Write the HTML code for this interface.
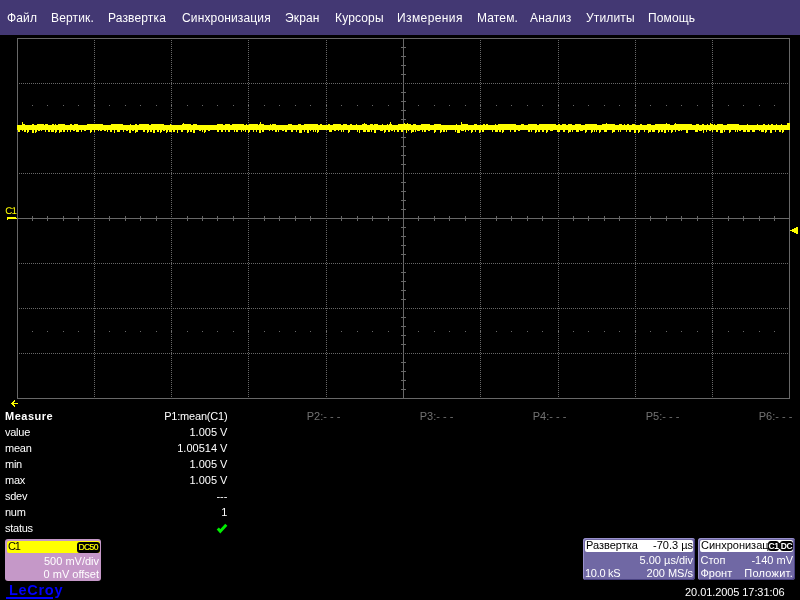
<!DOCTYPE html>
<html lang="ru">
<head>
<meta charset="utf-8">
<title>LeCroy</title>
<style>
html,body{margin:0;padding:0;background:#000;}
body{width:800px;height:600px;position:relative;overflow:hidden;font-family:"Liberation Sans",sans-serif;color:#fff;}
#scr{position:absolute;left:0;top:0;width:800px;height:600px;overflow:hidden;will-change:transform;}
.abs{position:absolute;white-space:nowrap;}
#menu{position:absolute;left:0;top:0;width:800px;height:35px;background:#433873;}
#menu span{position:absolute;top:11px;font-size:12px;line-height:14px;color:#fff;white-space:nowrap;letter-spacing:0.15px;}
.t{position:absolute;font-size:11px;line-height:13px;white-space:nowrap;}
.r{text-align:right;}
.g{color:#727272;}
.box{position:absolute;border-radius:3px;}
.hdr{position:absolute;border-radius:2px;}
.pb{background:#7068a4;box-shadow:inset 1px 1px 0 #9890cc,inset -1px -1px 0 #484080;}
.badge.wb{height:10px;line-height:10px;color:#fff;font-weight:bold;font-size:8.5px;letter-spacing:-0.5px;border-radius:3px;}
.badge{position:absolute;background:#000;border-radius:2px;font-weight:bold;font-size:8px;line-height:10px;text-align:center;}
</style>
</head>
<body>
<div id="scr">
<div id="menu">
<span style="left:7px">Файл</span>
<span style="left:51px">Вертик.</span>
<span style="left:108px">Развертка</span>
<span style="left:182px">Синхронизация</span>
<span style="left:285px">Экран</span>
<span style="left:335px">Курсоры</span>
<span style="left:397px;letter-spacing:0.4px">Измерения</span>
<span style="left:477px">Матем.</span>
<span style="left:530px">Анализ</span>
<span style="left:586px">Утилиты</span>
<span style="left:648px">Помощь</span>
</div>
<svg id="grid" width="800" height="600" viewBox="0 0 800 600" shape-rendering="crispEdges" style="position:absolute;left:0;top:0">
<path d="M17.5 38.5H789.5V398.5H17.5Z" fill="none" stroke="#686868" stroke-width="1"/>
<line x1="94.5" y1="40" x2="94.5" y2="398" stroke="#686868" stroke-width="1" stroke-dasharray="1 1"/>
<line x1="171.5" y1="40" x2="171.5" y2="398" stroke="#686868" stroke-width="1" stroke-dasharray="1 1"/>
<line x1="248.5" y1="40" x2="248.5" y2="398" stroke="#686868" stroke-width="1" stroke-dasharray="1 1"/>
<line x1="326.5" y1="40" x2="326.5" y2="398" stroke="#686868" stroke-width="1" stroke-dasharray="1 1"/>
<line x1="480.5" y1="40" x2="480.5" y2="398" stroke="#686868" stroke-width="1" stroke-dasharray="1 1"/>
<line x1="558.5" y1="40" x2="558.5" y2="398" stroke="#686868" stroke-width="1" stroke-dasharray="1 1"/>
<line x1="635.5" y1="40" x2="635.5" y2="398" stroke="#686868" stroke-width="1" stroke-dasharray="1 1"/>
<line x1="712.5" y1="40" x2="712.5" y2="398" stroke="#686868" stroke-width="1" stroke-dasharray="1 1"/>
<line x1="19" y1="83.5" x2="789" y2="83.5" stroke="#686868" stroke-width="1" stroke-dasharray="1 1"/>
<line x1="19" y1="128.5" x2="789" y2="128.5" stroke="#686868" stroke-width="1" stroke-dasharray="1 1"/>
<line x1="19" y1="173.5" x2="789" y2="173.5" stroke="#686868" stroke-width="1" stroke-dasharray="1 1"/>
<line x1="19" y1="263.5" x2="789" y2="263.5" stroke="#686868" stroke-width="1" stroke-dasharray="1 1"/>
<line x1="19" y1="308.5" x2="789" y2="308.5" stroke="#686868" stroke-width="1" stroke-dasharray="1 1"/>
<line x1="19" y1="353.5" x2="789" y2="353.5" stroke="#686868" stroke-width="1" stroke-dasharray="1 1"/>
<line x1="403.5" y1="38" x2="403.5" y2="398" stroke="#686868"/>
<line x1="17" y1="218.5" x2="789" y2="218.5" stroke="#686868"/>
<path d="M32.5 216V221M47.5 216V221M63.5 216V221M78.5 216V221M109.5 216V221M125.5 216V221M140.5 216V221M156.5 216V221M187.5 216V221M202.5 216V221M217.5 216V221M233.5 216V221M264.5 216V221M279.5 216V221M295.5 216V221M310.5 216V221M341.5 216V221M357.5 216V221M372.5 216V221M388.5 216V221M418.5 216V221M434.5 216V221M449.5 216V221M465.5 216V221M496.5 216V221M511.5 216V221M527.5 216V221M542.5 216V221M573.5 216V221M588.5 216V221M604.5 216V221M619.5 216V221M650.5 216V221M666.5 216V221M681.5 216V221M697.5 216V221M728.5 216V221M743.5 216V221M759.5 216V221M774.5 216V221M401 47.5H406M401 56.5H406M401 65.5H406M401 74.5H406M401 92.5H406M401 101.5H406M401 110.5H406M401 119.5H406M401 137.5H406M401 146.5H406M401 155.5H406M401 164.5H406M401 182.5H406M401 191.5H406M401 200.5H406M401 209.5H406M401 227.5H406M401 236.5H406M401 245.5H406M401 254.5H406M401 272.5H406M401 281.5H406M401 290.5H406M401 299.5H406M401 317.5H406M401 326.5H406M401 335.5H406M401 344.5H406M401 362.5H406M401 371.5H406M401 380.5H406M401 389.5H406" stroke="#686868" fill="none"/>
<path d="M32 105h1v1h-1zM47 105h1v1h-1zM63 105h1v1h-1zM78 105h1v1h-1zM94 105h1v1h-1zM109 105h1v1h-1zM125 105h1v1h-1zM140 105h1v1h-1zM156 105h1v1h-1zM171 105h1v1h-1zM187 105h1v1h-1zM202 105h1v1h-1zM217 105h1v1h-1zM233 105h1v1h-1zM248 105h1v1h-1zM264 105h1v1h-1zM279 105h1v1h-1zM295 105h1v1h-1zM310 105h1v1h-1zM326 105h1v1h-1zM341 105h1v1h-1zM357 105h1v1h-1zM372 105h1v1h-1zM388 105h1v1h-1zM403 105h1v1h-1zM418 105h1v1h-1zM434 105h1v1h-1zM449 105h1v1h-1zM465 105h1v1h-1zM480 105h1v1h-1zM496 105h1v1h-1zM511 105h1v1h-1zM527 105h1v1h-1zM542 105h1v1h-1zM558 105h1v1h-1zM573 105h1v1h-1zM588 105h1v1h-1zM604 105h1v1h-1zM619 105h1v1h-1zM635 105h1v1h-1zM650 105h1v1h-1zM666 105h1v1h-1zM681 105h1v1h-1zM697 105h1v1h-1zM712 105h1v1h-1zM728 105h1v1h-1zM743 105h1v1h-1zM759 105h1v1h-1zM774 105h1v1h-1zM32 331h1v1h-1zM47 331h1v1h-1zM63 331h1v1h-1zM78 331h1v1h-1zM94 331h1v1h-1zM109 331h1v1h-1zM125 331h1v1h-1zM140 331h1v1h-1zM156 331h1v1h-1zM171 331h1v1h-1zM187 331h1v1h-1zM202 331h1v1h-1zM217 331h1v1h-1zM233 331h1v1h-1zM248 331h1v1h-1zM264 331h1v1h-1zM279 331h1v1h-1zM295 331h1v1h-1zM310 331h1v1h-1zM326 331h1v1h-1zM341 331h1v1h-1zM357 331h1v1h-1zM372 331h1v1h-1zM388 331h1v1h-1zM403 331h1v1h-1zM418 331h1v1h-1zM434 331h1v1h-1zM449 331h1v1h-1zM465 331h1v1h-1zM480 331h1v1h-1zM496 331h1v1h-1zM511 331h1v1h-1zM527 331h1v1h-1zM542 331h1v1h-1zM558 331h1v1h-1zM573 331h1v1h-1zM588 331h1v1h-1zM604 331h1v1h-1zM619 331h1v1h-1zM635 331h1v1h-1zM650 331h1v1h-1zM666 331h1v1h-1zM681 331h1v1h-1zM697 331h1v1h-1zM712 331h1v1h-1zM728 331h1v1h-1zM743 331h1v1h-1zM759 331h1v1h-1zM774 331h1v1h-1z" fill="#686868"/>
</svg>
<svg id="trace" width="800" height="600" viewBox="0 0 800 600" shape-rendering="crispEdges" style="position:absolute;left:0;top:0">
<path d="M17 125H790V130H17ZM787 123h3v4h-3zM22 124h1v1h-1zM22 122h1v2h-1zM23 124h1v1h-1zM24 124h1v1h-1zM32 124h2v1h-2zM37 124h2v1h-2zM39 124h3v1h-3zM42 124h1v1h-1zM43 124h1v1h-1zM45 124h3v1h-3zM52 124h2v1h-2zM55 124h1v1h-1zM58 124h4v1h-4zM62 124h1v1h-1zM63 124h2v1h-2zM70 124h2v1h-2zM74 124h2v1h-2zM76 124h2v1h-2zM87 124h4v1h-4zM91 124h2v1h-2zM93 124h1v1h-1zM94 124h4v1h-4zM98 124h2v1h-2zM100 124h3v1h-3zM111 124h1v1h-1zM112 124h4v1h-4zM116 124h3v1h-3zM119 124h1v1h-1zM120 124h3v1h-3zM130 124h1v1h-1zM135 124h2v1h-2zM139 124h1v1h-1zM140 124h2v1h-2zM142 124h1v1h-1zM143 124h3v1h-3zM146 124h1v1h-1zM147 124h2v1h-2zM151 124h2v1h-2zM153 124h2v1h-2zM155 124h1v1h-1zM156 124h2v1h-2zM158 124h3v1h-3zM161 124h3v1h-3zM170 124h1v1h-1zM182 124h1v1h-1zM183 124h4v1h-4zM183 123h1v1h-1zM187 124h2v1h-2zM189 124h2v1h-2zM193 124h2v1h-2zM195 124h2v1h-2zM217 124h2v1h-2zM219 124h4v1h-4zM225 124h1v1h-1zM226 124h4v1h-4zM232 124h2v1h-2zM234 124h1v1h-1zM235 124h4v1h-4zM239 124h1v1h-1zM240 124h1v1h-1zM241 124h3v1h-3zM246 124h1v1h-1zM249 124h3v1h-3zM252 124h3v1h-3zM255 124h3v1h-3zM259 124h1v1h-1zM260 124h4v1h-4zM260 122h1v2h-1zM270 124h1v1h-1zM272 124h3v1h-3zM275 124h1v1h-1zM288 124h1v1h-1zM289 124h2v1h-2zM291 124h1v1h-1zM298 124h1v1h-1zM299 124h2v1h-2zM304 124h1v1h-1zM305 124h3v1h-3zM308 124h2v1h-2zM310 124h1v1h-1zM311 124h4v1h-4zM315 124h3v1h-3zM320 124h1v1h-1zM321 124h1v1h-1zM328 124h2v1h-2zM333 124h4v1h-4zM337 124h4v1h-4zM343 124h4v1h-4zM350 124h1v1h-1zM351 124h1v1h-1zM356 124h1v1h-1zM362 124h2v1h-2zM364 124h2v1h-2zM364 123h1v1h-1zM366 124h1v1h-1zM370 124h3v1h-3zM374 124h4v1h-4zM382 124h1v1h-1zM387 124h1v1h-1zM389 124h1v1h-1zM390 124h2v1h-2zM390 122h1v2h-1zM398 124h3v1h-3zM401 124h2v1h-2zM403 124h1v1h-1zM404 124h3v1h-3zM404 123h1v1h-1zM407 124h1v1h-1zM407 123h1v1h-1zM408 124h1v1h-1zM409 124h1v1h-1zM410 124h1v1h-1zM413 124h2v1h-2zM415 124h1v1h-1zM421 124h3v1h-3zM424 124h2v1h-2zM426 124h4v1h-4zM434 124h4v1h-4zM438 124h3v1h-3zM456 124h1v1h-1zM461 124h3v1h-3zM461 122h1v2h-1zM464 124h4v1h-4zM474 124h3v1h-3zM483 124h2v1h-2zM486 124h2v1h-2zM495 124h1v1h-1zM498 124h4v1h-4zM502 124h1v1h-1zM503 124h4v1h-4zM507 124h2v1h-2zM509 124h2v1h-2zM511 124h3v1h-3zM514 124h2v1h-2zM521 124h2v1h-2zM523 124h1v1h-1zM528 124h2v1h-2zM530 124h3v1h-3zM533 124h2v1h-2zM535 124h2v1h-2zM539 124h2v1h-2zM541 124h2v1h-2zM543 124h2v1h-2zM545 124h2v1h-2zM547 124h4v1h-4zM551 124h2v1h-2zM553 124h3v1h-3zM558 124h2v1h-2zM562 124h1v1h-1zM563 124h3v1h-3zM568 124h4v1h-4zM575 124h4v1h-4zM579 124h2v1h-2zM585 124h2v1h-2zM587 124h1v1h-1zM588 124h2v1h-2zM590 124h4v1h-4zM594 124h2v1h-2zM596 124h1v1h-1zM602 124h2v1h-2zM604 124h1v1h-1zM605 124h1v1h-1zM606 124h3v1h-3zM606 123h1v1h-1zM609 124h2v1h-2zM611 124h2v1h-2zM613 124h2v1h-2zM619 124h1v1h-1zM620 124h2v1h-2zM624 124h1v1h-1zM627 124h2v1h-2zM632 124h2v1h-2zM634 124h1v1h-1zM640 124h2v1h-2zM647 124h4v1h-4zM655 124h1v1h-1zM656 124h3v1h-3zM659 124h3v1h-3zM662 124h2v1h-2zM664 124h1v1h-1zM665 124h1v1h-1zM666 124h4v1h-4zM666 123h1v1h-1zM674 124h1v1h-1zM675 124h2v1h-2zM675 123h1v1h-1zM677 124h4v1h-4zM681 124h1v1h-1zM682 124h3v1h-3zM685 124h1v1h-1zM686 124h1v1h-1zM687 124h2v1h-2zM689 124h3v1h-3zM696 124h1v1h-1zM697 124h1v1h-1zM698 124h1v1h-1zM702 124h2v1h-2zM707 124h1v1h-1zM710 124h2v1h-2zM710 123h1v1h-1zM712 124h1v1h-1zM714 124h1v1h-1zM717 124h2v1h-2zM719 124h1v1h-1zM720 124h1v1h-1zM721 124h2v1h-2zM727 124h1v1h-1zM728 124h1v1h-1zM729 124h3v1h-3zM732 124h3v1h-3zM735 124h4v1h-4zM747 124h1v1h-1zM757 124h1v1h-1zM763 124h2v1h-2zM768 124h1v1h-1zM771 124h2v1h-2zM776 124h1v1h-1zM781 124h1v1h-1zM18 130h2v2h-2zM22 130h1v1h-1zM24 130h2v2h-2zM27 130h2v2h-2zM27 132h1v1h-1zM32 130h2v3h-2zM35 130h2v2h-2zM35 132h1v1h-1zM38 130h2v1h-2zM41 130h1v1h-1zM45 130h1v2h-1zM48 130h2v2h-2zM51 130h3v2h-3zM55 130h2v2h-2zM55 132h1v1h-1zM59 130h3v2h-3zM59 132h1v1h-1zM63 130h2v2h-2zM67 130h1v2h-1zM70 130h1v2h-1zM73 130h2v1h-2zM76 130h3v2h-3zM81 130h1v2h-1zM84 130h2v1h-2zM90 130h2v2h-2zM90 132h1v1h-1zM94 130h1v2h-1zM98 130h1v1h-1zM100 130h2v1h-2zM104 130h2v1h-2zM107 130h1v2h-1zM110 130h2v2h-2zM114 130h1v3h-1zM117 130h3v2h-3zM123 130h1v2h-1zM126 130h2v1h-2zM129 130h2v3h-2zM132 130h2v1h-2zM135 130h3v2h-3zM135 132h1v1h-1zM143 130h2v2h-2zM147 130h2v2h-2zM147 132h1v1h-1zM150 130h2v2h-2zM153 130h2v3h-2zM157 130h2v2h-2zM160 130h2v2h-2zM160 132h1v1h-1zM163 130h2v1h-2zM166 130h2v2h-2zM166 132h1v1h-1zM169 130h3v2h-3zM173 130h2v2h-2zM177 130h1v3h-1zM181 130h2v2h-2zM187 130h2v2h-2zM187 132h1v1h-1zM190 130h2v2h-2zM193 130h2v3h-2zM199 130h2v1h-2zM202 130h1v2h-1zM204 130h2v2h-2zM204 132h1v1h-1zM208 130h2v1h-2zM217 130h2v2h-2zM221 130h2v2h-2zM225 130h1v2h-1zM228 130h2v2h-2zM234 130h1v2h-1zM236 130h2v2h-2zM241 130h1v2h-1zM243 130h1v1h-1zM245 130h1v2h-1zM248 130h2v2h-2zM248 132h1v1h-1zM253 130h1v2h-1zM256 130h1v2h-1zM259 130h2v3h-2zM262 130h2v2h-2zM269 130h1v1h-1zM272 130h1v1h-1zM275 130h2v2h-2zM278 130h1v2h-1zM282 130h2v1h-2zM285 130h2v2h-2zM291 130h2v2h-2zM296 130h1v2h-1zM299 130h3v3h-3zM304 130h1v2h-1zM307 130h2v3h-2zM310 130h1v1h-1zM313 130h1v2h-1zM315 130h1v2h-1zM317 130h2v2h-2zM317 132h1v1h-1zM329 130h3v2h-3zM334 130h2v1h-2zM338 130h1v1h-1zM341 130h1v2h-1zM343 130h1v2h-1zM348 130h2v2h-2zM348 132h1v1h-1zM357 130h1v2h-1zM359 130h1v3h-1zM363 130h3v2h-3zM367 130h3v2h-3zM371 130h1v2h-1zM374 130h2v3h-2zM380 130h3v1h-3zM384 130h2v2h-2zM384 132h1v1h-1zM388 130h2v2h-2zM391 130h2v1h-2zM394 130h1v2h-1zM397 130h2v2h-2zM401 130h2v2h-2zM406 130h1v3h-1zM408 130h1v1h-1zM411 130h3v2h-3zM411 132h1v1h-1zM415 130h1v2h-1zM417 130h3v1h-3zM422 130h1v2h-1zM424 130h2v2h-2zM428 130h2v1h-2zM434 130h2v2h-2zM434 132h1v1h-1zM440 130h2v2h-2zM440 132h1v1h-1zM443 130h2v2h-2zM446 130h1v2h-1zM455 130h1v2h-1zM457 130h3v3h-3zM461 130h3v1h-3zM465 130h1v2h-1zM468 130h1v1h-1zM471 130h2v2h-2zM471 132h1v1h-1zM475 130h1v2h-1zM479 130h2v2h-2zM479 132h1v1h-1zM482 130h2v2h-2zM492 130h1v2h-1zM495 130h3v2h-3zM499 130h2v2h-2zM502 130h2v2h-2zM502 132h1v1h-1zM510 130h1v2h-1zM514 130h2v2h-2zM518 130h2v1h-2zM528 130h2v2h-2zM531 130h1v2h-1zM535 130h2v2h-2zM535 132h1v1h-1zM538 130h2v2h-2zM542 130h2v2h-2zM546 130h2v2h-2zM546 132h1v1h-1zM550 130h3v1h-3zM557 130h3v2h-3zM563 130h2v2h-2zM568 130h3v2h-3zM568 132h1v1h-1zM572 130h1v2h-1zM576 130h3v2h-3zM580 130h3v1h-3zM585 130h2v2h-2zM585 132h1v1h-1zM591 130h2v2h-2zM591 132h1v1h-1zM594 130h1v2h-1zM596 130h1v2h-1zM599 130h2v2h-2zM599 132h1v1h-1zM604 130h3v2h-3zM612 130h3v2h-3zM612 132h1v1h-1zM618 130h1v2h-1zM620 130h1v2h-1zM626 130h1v2h-1zM629 130h2v2h-2zM634 130h2v3h-2zM638 130h2v2h-2zM638 132h1v1h-1zM644 130h1v2h-1zM648 130h3v2h-3zM648 132h1v1h-1zM652 130h3v2h-3zM658 130h2v2h-2zM658 132h1v1h-1zM661 130h2v2h-2zM664 130h2v3h-2zM668 130h1v2h-1zM671 130h2v2h-2zM671 132h1v1h-1zM675 130h1v2h-1zM678 130h2v1h-2zM681 130h1v1h-1zM686 130h2v3h-2zM695 130h3v2h-3zM699 130h3v1h-3zM703 130h1v3h-1zM706 130h1v2h-1zM709 130h2v1h-2zM712 130h1v2h-1zM716 130h2v2h-2zM720 130h3v3h-3zM724 130h1v2h-1zM729 130h2v2h-2zM729 132h1v1h-1zM735 130h1v2h-1zM737 130h1v2h-1zM739 130h2v1h-2zM743 130h3v2h-3zM747 130h3v2h-3zM752 130h3v2h-3zM759 130h1v1h-1zM761 130h3v2h-3zM765 130h2v2h-2zM765 132h1v1h-1zM770 130h2v3h-2zM775 130h1v2h-1zM779 130h2v2h-2zM782 130h2v2h-2zM782 132h1v1h-1z" fill="#ffff00"/>
</svg>
<!-- markers -->
<svg width="800" height="600" viewBox="0 0 800 600" shape-rendering="crispEdges" style="position:absolute;left:0;top:0">
<path d="M7 217H16V218H17V219H8V220H7Z" fill="#ffff00"/>
<path d="M790 230h2v-1h2v-1h2v-1h2v7h-2v-1h-2v-1h-2v-1h-2z" fill="#ffff00"/>
<path d="M11 403h7v1h-7zM12 402h1v3h-1zM13 401h1v5h-1zM14 400h1v2h-1zM14 405h1v2h-1z" fill="#ffff00"/>
</svg>
<svg width="20" height="14" style="position:absolute;left:0;top:203px"><text x="5.3" y="11" font-family="Liberation Sans, sans-serif" font-size="9.8" fill="#ffff00" text-rendering="geometricPrecision" letter-spacing="-0.9">C1</text></svg>

<!-- measure table -->
<div class="t" style="left:5px;top:410px;font-weight:bold;letter-spacing:0.5px;">Measure</div>
<div class="t" style="left:5px;top:426px;letter-spacing:-0.25px;">value</div>
<div class="t" style="left:5px;top:442px;letter-spacing:-0.25px;">mean</div>
<div class="t" style="left:5px;top:458px;letter-spacing:-0.25px;">min</div>
<div class="t" style="left:5px;top:474px;letter-spacing:-0.25px;">max</div>
<div class="t" style="left:5px;top:490px;letter-spacing:-0.25px;">sdev</div>
<div class="t" style="left:5px;top:506px;letter-spacing:-0.25px;">num</div>
<div class="t" style="left:5px;top:522px;letter-spacing:-0.25px;">status</div>

<div class="t r" style="left:108px;width:119.4px;top:410px;letter-spacing:-0.2px;">P1:mean(C1)</div>
<div class="t r" style="left:108px;width:119.4px;top:426px;">1.005 V</div>
<div class="t r" style="left:108px;width:119.4px;top:442px;">1.00514 V</div>
<div class="t r" style="left:108px;width:119.4px;top:458px;">1.005 V</div>
<div class="t r" style="left:108px;width:119.4px;top:474px;">1.005 V</div>
<div class="t r" style="left:108px;width:119.4px;top:490px;">---</div>
<div class="t r" style="left:108px;width:119.4px;top:506px;">1</div>
<svg width="13" height="12" viewBox="0 0 13 12" style="position:absolute;left:216px;top:523px"><path d="M1.8 5.5L4.3 8.3L10.3 1.8" fill="none" stroke="#00ee00" stroke-width="2.9" stroke-linejoin="miter"/></svg>

<div class="t r g" style="left:221px;width:119.4px;top:410px;">P2:- - -</div>
<div class="t r g" style="left:334px;width:119.4px;top:410px;">P3:- - -</div>
<div class="t r g" style="left:447px;width:119.4px;top:410px;">P4:- - -</div>
<div class="t r g" style="left:560px;width:119.4px;top:410px;">P5:- - -</div>
<div class="t r g" style="left:673px;width:119.4px;top:410px;">P6:- - -</div>

<!-- C1 descriptor box -->
<div class="box" style="left:5px;top:539px;width:96px;height:42px;background:#c598c8;"></div>
<div class="hdr" style="left:7px;top:541px;width:93px;height:12px;background:#ffff00;"></div>
<div class="t" style="left:8px;top:540px;color:#000;letter-spacing:-1.3px;">C1</div>
<div class="badge" style="left:77px;top:542px;width:23px;height:10.5px;line-height:10.5px;color:#ffff00;font-weight:normal;font-size:8.5px;letter-spacing:-0.6px;text-indent:-0.6px;-webkit-text-stroke:0.2px #ffff00;border-radius:3px;">DC50</div>
<div class="t r" style="left:9px;width:90px;top:555px;">500 mV/div</div>
<div class="t r" style="left:9px;width:90px;top:568px;">0 mV offset</div>

<!-- LeCroy logo -->
<div class="abs" style="left:9px;top:582px;font-size:14.5px;line-height:17px;font-weight:bold;color:#0000ff;letter-spacing:0.7px;">LeCroy</div>
<div class="abs" style="left:6px;top:597px;width:47px;height:2px;background:#0000ff;"></div>

<!-- Timebase box -->
<div class="box pb" style="left:583px;top:538px;width:112px;height:42px;"></div>
<div class="hdr" style="left:585px;top:540px;width:108px;height:12px;background:#fff;"></div>
<div class="t" style="left:586px;top:539px;color:#000;">Развертка</div>
<div class="t r" style="left:601px;width:92px;top:539px;color:#000;">-70.3 µs</div>
<div class="t r" style="left:601px;width:92px;top:554px;">5.00 µs/div</div>
<div class="t" style="left:585px;top:567px;letter-spacing:-0.3px;">10.0 kS</div>
<div class="t r" style="left:601px;width:92px;top:567px;">200 MS/s</div>

<!-- Trigger box -->
<div class="box pb" style="left:698px;top:538px;width:97px;height:42px;"></div>
<div class="hdr" style="left:700px;top:540px;width:93px;height:12px;background:#fff;overflow:hidden;"><div class="t" style="left:1px;top:-1px;color:#000;">Синхронизация</div></div>
<div class="badge wb" style="left:768px;top:541px;width:11px;">C1</div>
<div class="badge wb" style="left:780px;top:541px;width:13px;">DC</div>
<div class="t" style="left:700.5px;top:554px;">Стоп</div>
<div class="t r" style="left:712px;width:81px;top:554px;">-140 mV</div>
<div class="t" style="left:700.5px;top:567px;">Фронт</div>
<div class="t r" style="left:712px;width:81px;top:567px;letter-spacing:0.25px;">Положит.</div>

<!-- date -->
<div class="t r" style="left:600px;width:184.5px;top:586px;letter-spacing:-0.08px;">20.01.2005 17:31:06</div>
</div>
</body>
</html>
